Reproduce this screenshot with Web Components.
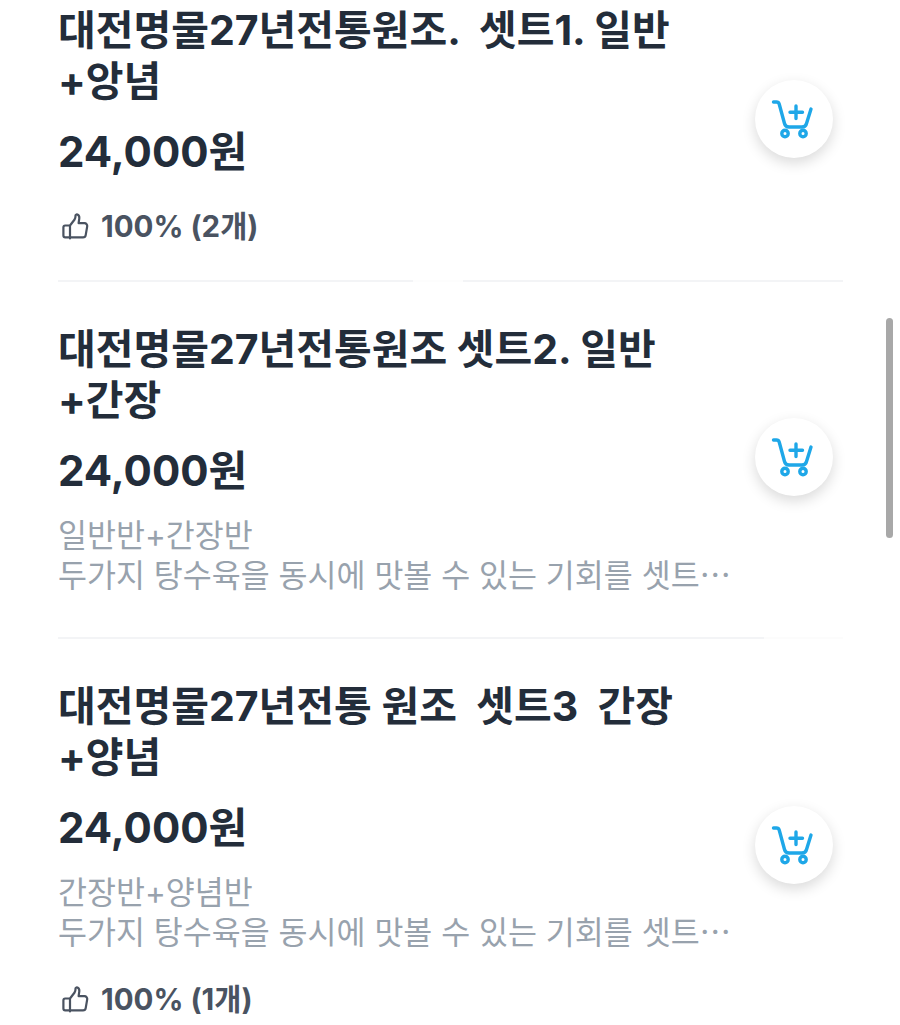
<!DOCTYPE html>
<html lang="ko">
<head>
<meta charset="utf-8">
<title>메뉴</title>
<style>
  html, body { margin: 0; height: 100%; overflow: hidden; background: #fff; }
  body { font-family: Inter, "Noto Sans CJK KR", sans-serif; }
</style>
</head>
<body>
<menu-list>
  <menu-item style="--rule: linear-gradient(90deg, #f3f4f6 355px, #fdfdfd 355px 405px, #f3f4f6 405px)">
    <span slot="name">대전명물27년전통원조.  셋트1. 일반+앙념</span>
    <span slot="price">24,000원</span>
    <rating-row slot="rating">100% (2개)</rating-row>
  </menu-item>
  <menu-item style="--rule: linear-gradient(90deg, #f3f4f6 705px, #fcfcfc 705px)">
    <span slot="name">대전명물27년전통원조 셋트2. 일반+간장</span>
    <span slot="price">24,000원</span>
    <span slot="desc">일반반+간장반</span>
    <span slot="desc">두가지 탕수육을 동시에 맛볼 수 있는 기회를 셋트⋯</span>
  </menu-item>
  <menu-item>
    <span slot="name">대전명물27년전통 원조  셋트3  간장+양념</span>
    <span slot="price">24,000원</span>
    <span slot="desc">간장반+양념반</span>
    <span slot="desc">두가지 탕수육을 동시에 맛볼 수 있는 기회를 셋트⋯</span>
    <rating-row slot="rating">100% (1개)</rating-row>
  </menu-item>
</menu-list>
<scroll-thumb></scroll-thumb>
<script>
"use strict";
class MenuList extends HTMLElement {
    constructor() {
        super();
        this.attachShadow({ mode: 'open' }).innerHTML = `
      <style>
      :host { display: block; margin-top: -37px; padding: 0 57px 0 58px; }
      ::slotted(menu-item:not(:last-child)) { border-bottom: 2px solid #f3f4f6; border-image: var(--rule) 1; }
      </style>
      <slot></slot>`;
    }
}
class MenuItem extends HTMLElement {
    constructor() {
        super();
        this.attachShadow({ mode: 'open' }).innerHTML = `
      <style>
      :host { display: flex; align-items: center; padding-right: 10px; }
      #info { width: 680px; flex: none; padding-top: 42px; }
      #name { width: 630px; font-size: 41px; line-height: 51px; font-weight: 700; color: #232d3a; white-space: pre-wrap; }
      #price { margin-top: 19px; font-size: 42px; line-height: 52px; font-weight: 700; color: #232d3a; }
      #desc { margin-top: 19px; font-size: 31.5px; line-height: 40px; color: #98a2ad; white-space: nowrap; }
      #desc ::slotted(span) { display: block; }
      #rating { margin-top: 28px; }
      #desc.on ~ #rating { margin-top: 26px; }
      #desc:not(.on), #rating:not(.on) { display: none; }
      .tail { padding-bottom: 41px; }
      #rating.on ~ .tail { padding-bottom: 34px; }
      #desc.on ~ #rating.on ~ .tail { padding-bottom: 36px; }
      cart-button { margin-left: auto; margin-bottom: 5px; flex: none; }
      </style>
      <div id="info">
        <div id="name"><slot name="name"></slot></div>
        <div id="price"><slot name="price"></slot></div>
        <div id="desc"><slot name="desc"></slot></div>
        <div id="rating"><slot name="rating"></slot></div>
        <div class="tail"></div>
      </div>
      <cart-button></cart-button>`;
    }
    connectedCallback() {
        // sections without content stay out of the flow
        const root = this.shadowRoot;
        root.getElementById('desc').classList.toggle('on', !!this.querySelector('[slot=desc]'));
        root.getElementById('rating').classList.toggle('on', !!this.querySelector('[slot=rating]'));
    }
}
class CartButton extends HTMLElement {
    constructor() {
        super();
        this.attachShadow({ mode: 'open' }).innerHTML = `
      <style>
      :host { display: block; width: 78px; height: 78px; border-radius: 50%; background: #fff;
        box-shadow: 0 5px 14px rgba(0, 0, 0, .15); }
      svg { display: block; }
      </style>
      <svg width="78" height="78" viewBox="0 0 78 78" fill="none" stroke="#1ea7e8" stroke-width="3.4" stroke-linecap="round" stroke-linejoin="round">
        <path d="M18.5 22h3c1.3 0 2.3.8 2.7 2L29.5 43.5c.6 2.3 2 3.5 4.5 3.5h13c2.5 0 4-1.3 4.5-3.5L56 29"/>
        <path d="M41 26v12.5M35 32.3h12.5"/>
        <circle cx="30" cy="53.5" r="3.2"/>
        <circle cx="48" cy="53.5" r="3.2"/>
      </svg>`;
    }
}
class RatingRow extends HTMLElement {
    constructor() {
        super();
        this.attachShadow({ mode: 'open' }).innerHTML = `
      <style>
      :host { display: flex; align-items: center; gap: 12px; padding-left: 4px; font-size: 29.5px; line-height: 40px; font-weight: 700; color: #4a5361; }
      svg { display: block; flex: none; }
      </style>
      <svg width="27" height="27" viewBox="0 0 27 27" fill="none" stroke="#4a5361" stroke-width="2.2" stroke-linejoin="round" stroke-linecap="round">
        <path d="M8 12.5 12.6 6.5c.6-1 .9-2.2.9-3.4V2.6c0-.9 1-1.4 1.9-1 1.4.7 2.1 2.2 1.9 3.8l-.7 4.8h5.9c1.7 0 3 1.5 2.7 3.2l-1.5 8.7c-.2 1.3-1.4 2.3-2.7 2.3H3.2c-1 0-1.8-.8-1.8-1.8V14.3c0-1 .8-1.8 1.8-1.8H8v13"/>
      </svg>
      <span><slot></slot></span>`;
    }
}
class ScrollThumb extends HTMLElement {
    constructor() {
        super();
        this.attachShadow({ mode: 'open' }).innerHTML = `
      <style>
      :host { position: fixed; left: 886px; top: 318px; width: 7px; height: 220px; border-radius: 4px; background: #a8a8a8; }
      </style>`;
    }
}
customElements.define('menu-list', MenuList);
customElements.define('menu-item', MenuItem);
customElements.define('cart-button', CartButton);
customElements.define('rating-row', RatingRow);
customElements.define('scroll-thumb', ScrollThumb);
</script>
</body>
</html>
